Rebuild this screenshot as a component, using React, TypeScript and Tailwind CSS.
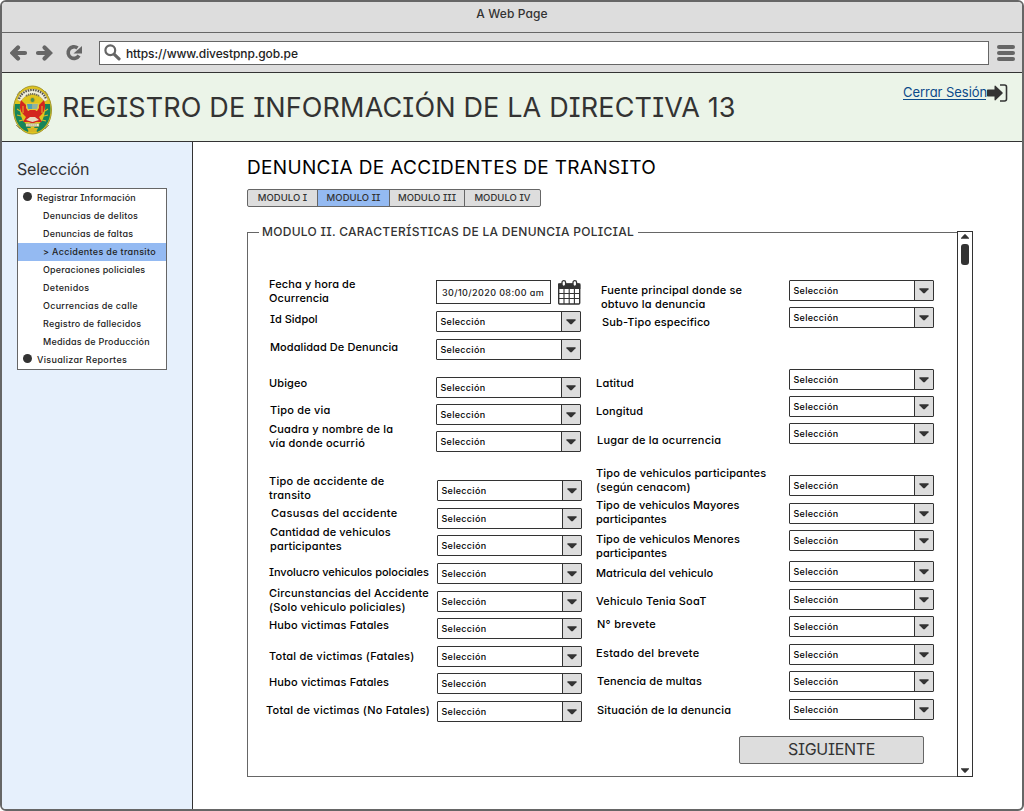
import React from "react";

type Field = { gap: string; text: string[] };

const leftLabels: Field[] = [
  { gap: "mt-[44px] ml-[21px] tracking-[0.12px]", text: ["Fecha y hora de", "Ocurrencia"] },
  { gap: "mt-[7px] ml-[22px] tracking-[0px]", text: ["Id Sidpol"] },
  { gap: "mt-[14px] ml-[22px] tracking-[0.07px]", text: ["Modalidad De Denuncia"] },
  { gap: "mt-[22px] ml-[21px] tracking-[0.1px]", text: ["Ubigeo"] },
  { gap: "mt-[13px] ml-[22px] tracking-[0.18px]", text: ["Tipo de via"] },
  { gap: "mt-[5px] ml-[21px] tracking-[0.18px]", text: ["Cuadra y nombre de la", "vía donde ocurrió"] },
  { gap: "mt-[24px] ml-[21px] tracking-[0.23px]", text: ["Tipo de accidente de", "transito"] },
  { gap: "mt-[4px] ml-[23px] tracking-[0.3px]", text: ["Casusas del accidente"] },
  { gap: "mt-[5px] ml-[22px] tracking-[0.15px]", text: ["Cantidad de vehiculos", "participantes"] },
  { gap: "mt-[12px] ml-[21px] tracking-[-0.03px]", text: ["Involucro vehiculos polociales"] },
  { gap: "mt-[7px] ml-[21px] tracking-[0.2px]", text: ["Circunstancias del Accidente", "(Solo vehiculo policiales)"] },
  { gap: "mt-[4px] ml-[21px] tracking-[0.15px]", text: ["Hubo victimas Fatales"] },
  { gap: "mt-[17px] ml-[21px] tracking-[0.23px]", text: ["Total de victimas (Fatales)"] },
  { gap: "mt-[12px] ml-[21px] tracking-[0.15px]", text: ["Hubo victimas Fatales"] },
  { gap: "mt-[14px] ml-[18px] tracking-[0.23px]", text: ["Total de victimas (No Fatales)"] },
];

const rightLabels: Field[] = [
  { gap: "mt-[50px] ml-[20px] tracking-[0.19px]", text: ["Fuente principal donde se", "obtuvo la denuncia"] },
  { gap: "mt-[4px] ml-[21px] tracking-[0.12px]", text: ["Sub-Tipo especifico"] },
  { gap: "mt-[47px] ml-[15px] tracking-[0.2px]", text: ["Latitud"] },
  { gap: "mt-[14px] ml-[15px] tracking-[0.12px]", text: ["Longitud"] },
  { gap: "mt-[15px] ml-[16px] tracking-[0.22px]", text: ["Lugar de la ocurrencia"] },
  { gap: "mt-[19px] ml-[15px] tracking-[0.15px]", text: ["Tipo de vehiculos participantes", "(según cenacom)"] },
  { gap: "mt-[4px] ml-[15px] tracking-[0.07px]", text: ["Tipo de vehiculos Mayores", "participantes"] },
  { gap: "mt-[6px] ml-[15px] tracking-[0.08px]", text: ["Tipo de vehiculos Menores", "participantes"] },
  { gap: "mt-[6px] ml-[15px] tracking-[0.03px]", text: ["Matricula del vehiculo"] },
  { gap: "mt-[14px] ml-[15px] tracking-[0.17px]", text: ["Vehiculo Tenia SoaT"] },
  { gap: "mt-[9px] ml-[16px] tracking-[0.3px]", text: ["N° brevete"] },
  { gap: "mt-[15px] ml-[15px] tracking-[0.3px]", text: ["Estado del brevete"] },
  { gap: "mt-[14px] ml-[16px] tracking-[0.1px]", text: ["Tenencia de multas"] },
  { gap: "mt-[15px] ml-[16px] tracking-[0.17px]", text: ["Situación de la denuncia"] },
];

const leftSelects = [
  "mt-[7px]", "mt-[7px]", "mt-[17px]", "mt-[6px]", "mt-[6px]",
  "mt-[28px] ml-px", "mt-[7px] ml-px", "mt-[6px] ml-px", "mt-[7px] ml-px", "mt-[7px] ml-px",
  "mt-[6px] ml-px", "mt-[7px] ml-px", "mt-[6px] ml-px", "mt-[7px] ml-px",
];

const rightSelects = [
  "mt-[47px]", "mt-[6px]", "mt-[41px]", "mt-[6px]", "mt-[6px]", "mt-[31px]", "mt-[7px]",
  "mt-[6px]", "mt-[10px]", "mt-[7px]", "mt-[6px]", "mt-[7px]", "mt-[6px]", "mt-[7px]",
];

const menu = [
  { label: "Denuncias de delitos", style: "tracking-[0.25px]" },
  { label: "Denuncias de faltas", style: "tracking-[0.22px]" },
  { label: "> Accidentes de transito", style: "tracking-[0.32px] bg-[#94baf2]" },
  { label: "Operaciones policiales", style: "tracking-[0.18px]" },
  { label: "Detenidos", style: "tracking-[0.33px]" },
  { label: "Ocurrencias de calle", style: "tracking-[0.28px]" },
  { label: "Registro de fallecidos", style: "tracking-[0.24px]" },
  { label: "Medidas de Producción", style: "tracking-[0.23px]" },
];

function Labels({ items }: { items: Field[] }) {
  return (
    <>
      {items.map((f, i) => (
        <div key={i} className={`text-[11px] leading-[14px] font-medium whitespace-nowrap ${f.gap}`}>
          {f.text.map((t) => (
            <div key={t}>{t}</div>
          ))}
        </div>
      ))}
    </>
  );
}

function Select({ place }: { place: string }) {
  return (
    <div className={`flex h-[21px] w-[145px] shrink-0 rounded-[1px] border border-[#333] ${place}`}>
      <span className="flex-1 pl-[3.500px] text-[9px] leading-[20px] font-medium tracking-[0.3px]">Selección</span>
      <span className="flex w-[19px] items-center justify-center border-l border-[#333] bg-[#ddd]">
        <svg width="10" height="6" viewBox="0 0 10 6"><path d="M.7.3h8.600Q10 .5 9.500 1.200L5.700 5.200H4.300L.5 1.200Q0 .5.7.3Z" fill="#333" /></svg>
      </span>
    </div>
  );
}

function Emblem() {
  return (
    <svg className="mt-[12px] ml-[10px] h-[50px] w-[41px] shrink-0" viewBox="0 0 41 50">
      <path d="M5 10l3-4 4 3M36 10l-3-4-4 3M4 40l4 4 4-3M37 40l-4 4-4-3" fill="#c9c7a6" stroke="#999772" />
      <ellipse cx="20.5" cy="25" rx="19" ry="24" fill="#dfc51d" stroke="#a49730" />
      <path d="M3 19C1 31 5 43 16 47l3-5C11 39 7 31 8 19Z" fill="#16845a" />
      <path d="M38 19c2 12-2 24-13 28l-3-5c8-3 12-11 11-23Z" fill="#16845a" />
      <path d="M5 15C9 0 32 0 36 15l-4 2C28 7 13 7 9 17Z" fill="#f1efdb" stroke="#b9a331" strokeWidth=".6" />
      <path d="M7 14C11 2 30 2 34 14" fill="none" stroke="#55544b" strokeWidth="2.200" strokeDasharray="1.500 1" />
      <path d="M14 11q6.500-4 13 0" fill="none" stroke="#777257" strokeWidth="2" strokeDasharray="1.300 .8" />
      <path d="M9 15l5 5 13 0 5-5c2 6 1 11-2 14l-3 3 3 5-6 0-2 1h-3l-2-1-6 0 3-5-3-3c-3-3-4-8-2-14Z" fill="#d3261f" />
      <path d="M14 18h13v5l-2 3H16l-2-3Z" fill="#e2ca3a" />
      <path d="M15 19h5.500v5H16Z" fill="#4d9fb8" /><path d="M20.500 19H26l-1 5h-4.500Z" fill="#8fb3a2" />
      <path d="M16.500 25h8l-4 3Z" fill="#d3261f" />
      <path d="M14 35l4-3h5l4 3-6.500 2Z" fill="#e9d9c0" />
      <path d="M11 21v7M30 21v7" stroke="#e4bc2c" strokeWidth="1" />
      <circle cx="20.500" cy="15" r="2.500" fill="#4c9152" stroke="#d9b520" />
      <path d="M14 38.500h13v3H14Z" fill="#f3efd4" stroke="#a19453" strokeWidth=".5" />
      <path d="M15.500 40h10" stroke="#77704e" strokeDasharray="1.200 .8" />
      <path d="M15 43h11l-2 4h-7Z" fill="#d8b523" />
      <path d="M5 24l3 2M5 30l4 1M7 36l4-1M36 24l-3 2M36 30l-4 1M34 36l-4-1" stroke="#ddb928" strokeWidth="1.200" />
    </svg>
  );
}

export default function App() {
  return (
    <div className="flex h-[811px] w-[1024px] flex-col overflow-hidden rounded-[6px] border-2 border-[#666] bg-white font-[Inter,sans-serif] text-black [font-feature-settings:'cv11','cv08','ss03']">
      <div className="flex h-[31px] shrink-0 justify-center border-b border-[#666] bg-[#ddd] text-[12px] leading-[23px] font-medium tracking-[0.1px] text-[#333]">A Web Page</div>

      <div className="flex h-[40px] shrink-0 items-center border-b border-[#333] bg-[#ddd]">
        <svg className="ml-[8px] shrink-0" width="74" height="18" viewBox="0 0 74 18" fill="none" stroke="#666">
          <path d="M8 3.500L2.500 9 8 14.500M4 9h11" strokeWidth="4.200" strokeLinecap="round" />
          <path d="M34.500 3.500L40 9 34.500 14.500M38 9H28" strokeWidth="4.200" strokeLinecap="round" />
          <path d="M67.500 4A5.800 5.800 0 1 0 69 11.500" strokeWidth="3.600" />
          <path d="M72 2v7.500h-8.500Z" fill="#666" stroke="none" />
        </svg>
        <div className="ml-[15px] flex h-[24px] w-[890px] items-center border border-[#666] bg-white">
          <svg className="ml-[4px]" width="17" height="17" viewBox="0 0 17 17" fill="none" stroke="#666"><circle cx="6.300" cy="6.300" r="4.900" strokeWidth="2.200" /><path d="M10.300 10.300L15 14.800" strokeWidth="3.200" strokeLinecap="round" /></svg>
          <span className="mt-[2px] ml-[5px] text-[12px] leading-[20px] font-medium tracking-[-0.1px] text-[#222]">https://www.divestpnp.gob.pe</span>
        </div>
        <div className="ml-[8px] flex w-[18px] flex-col gap-[2px]">
          <span className="h-[4px] rounded-full bg-[#666]" /><span className="h-[4px] rounded-full bg-[#666]" /><span className="h-[4px] rounded-full bg-[#666]" />
        </div>
      </div>

      <header className="flex h-[69px] shrink-0 border-b border-[#333] bg-[#ebf4e8]">
        <Emblem />
        <h1 className="ml-[9px] w-[841px] text-[27px] leading-[69px] font-normal tracking-[0.15px] whitespace-nowrap text-[#333]">REGISTRO DE INFORMACIÓN DE LA DIRECTIVA 13</h1>
        <a className="mt-[11px] h-[16px] w-[83px] border-b border-[#0b4a8a] text-[13px] leading-[16px] tracking-[-0.05px] whitespace-nowrap text-[#0b4a8a]">Cerrar Sesión</a>
        <svg className="mt-[11px] ml-[1px] shrink-0" width="21" height="18" viewBox="0 0 21 18"><path d="M0 6.200q0-.7.7-.7H7.500V2.200q.2-1 1-.5L15.600 8.500q.4.500 0 1L8.500 16.300q-.8.500-1-.5V12.500H.7Q0 12.500 0 11.800Z" fill="#333" /><path d="M13 1h4.500q2 0 2 2v12q0 2-2 2H13" fill="none" stroke="#333" strokeWidth="1.600" /></svg>
      </header>

      <div className="flex min-h-0 flex-1">
        <aside className="w-[191px] shrink-0 border-r border-[#333] bg-[#e6f0fc] pt-[17px] pl-[15px] text-[#333]">
          <h2 className="text-[16px] leading-[20px] tracking-[-0.2px]">Selección</h2>
          <div className="mt-[9px] h-[182px] w-[150px] border border-[#666] bg-white text-[9px] leading-[18px] font-medium whitespace-nowrap text-[#222]">
            <div className="flex h-[18px] pl-[5px] tracking-[0.18px]"><span className="mt-[3px] mr-[5px] size-[9px] rounded-full bg-[#333]" />Registrar Información</div>
            {menu.map((m) => (
              <div key={m.label} className={`h-[18px] pl-[25px] ${m.style}`}>{m.label}</div>
            ))}
            <div className="flex h-[18px] pl-[5px] tracking-[0.32px]"><span className="mt-[3px] mr-[5px] size-[9px] rounded-full bg-[#333]" />Visualizar Reportes</div>
          </div>
        </aside>

        <main className="flex flex-col pl-[54px]">
          <h2 className="mt-[14px] text-[19px] leading-[24px] tracking-[0.34px] whitespace-nowrap">DENUNCIA DE ACCIDENTES DE TRANSITO</h2>
          <div className="mt-[9px] flex h-[18px] w-[294px] overflow-hidden rounded-[2px] border border-[#666] bg-[#ddd] text-center text-[9.500px] leading-[15px] font-medium tracking-[0.05px] text-[#333]">
            <span className="w-[70px] border-r border-[#666]">MODULO I</span>
            <span className="w-[72px] border-r border-[#666] bg-[#94baf2]">MODULO II</span>
            <span className="w-[75px] border-r border-[#666]">MODULO III</span>
            <span className="flex-1">MODULO IV</span>
          </div>

          <div className="mt-[16px] flex h-[18px] items-center text-[12px] text-[#333]">
            <span className="h-[9px] w-[12px] self-end border-t border-l border-[#666]" />
            <span className="mx-[3px] w-[373px] leading-[16px] font-medium tracking-[0.28px] whitespace-nowrap">MODULO II. CARACTERÍSTICAS DE LA DENUNCIA POLICIAL</span>
            <span className="h-[9px] w-[319px] self-end border-t border-[#666]" />
            <span className="h-[10px] w-[16px] self-end border-x border-t border-[#333]" />
          </div>
          <div className="-mt-[8px] flex h-[544px] w-[726px]">
            <div className="flex w-[710px] border-b border-l border-[#666]">
              <div className="w-[188px] shrink-0"><Labels items={leftLabels} /></div>
              <div className="w-[145px] shrink-0">
                <div className="mt-[47px] flex h-[24px]">
                  <span className="h-[24px] w-[115px] shrink-0 border border-[#333] pl-[5px] text-[9px] leading-[23px] font-medium tracking-[0.4px] whitespace-nowrap text-[#222]">30/10/2020 08:00 am</span>
                  <svg className="ml-[6px] shrink-0" width="24" height="25" viewBox="0 0 24 25">
                    <rect x="1.700" y="4" width="21" height="20" rx="1" fill="#fff" stroke="#333" strokeWidth="1.400" />
                    <path d="M1 3.500h22.400V9H1Z" fill="#333" />
                    <path d="M7 9v15M12.200 9v15M17.400 9v15M1.500 13.500h21M1.500 18.500h21" stroke="#333" strokeWidth="1.100" />
                    <rect x="5" y=".7" width="3.600" height="5.600" rx="1.800" fill="#fff" stroke="#333" strokeWidth="1.300" /><rect x="16" y=".7" width="3.600" height="5.600" rx="1.800" fill="#fff" stroke="#333" strokeWidth="1.300" />
                  </svg>
                </div>
                {leftSelects.map((p, i) => <Select key={i} place={p} />)}
              </div>
              <div className="w-[208px] shrink-0"><Labels items={rightLabels} /></div>
              <div className="w-[145px] shrink-0">
                {rightSelects.map((p, i) => <Select key={i} place={p} />)}
                <button className="mt-[16px] -ml-[50px] block h-[28px] w-[185px] rounded-[2px] border border-[#666] bg-[#ddd] pb-[2px] text-[16px] leading-[24px] tracking-[-0.3px] text-[#333]">SIGUIENTE</button>
              </div>
            </div>
            <div className="flex w-[16px] flex-col items-center border-x border-b border-[#333]">
              <svg className="mt-[1px]" width="8" height="5" viewBox="0 0 8 5"><path d="M0 4.700V4L3.500.3h1L8 4v.7Z" fill="#333" /></svg>
              <span className="mt-[5px] h-[21px] w-[8px] rounded-[3px] bg-[#333]" />
              <svg className="mt-auto mb-[3px]" width="8" height="5" viewBox="0 0 8 5"><path d="M0 .3V1l3.500 3.700h1L8 1V.3Z" fill="#333" /></svg>
            </div>
          </div>
        </main>
      </div>
    </div>
  );
}
